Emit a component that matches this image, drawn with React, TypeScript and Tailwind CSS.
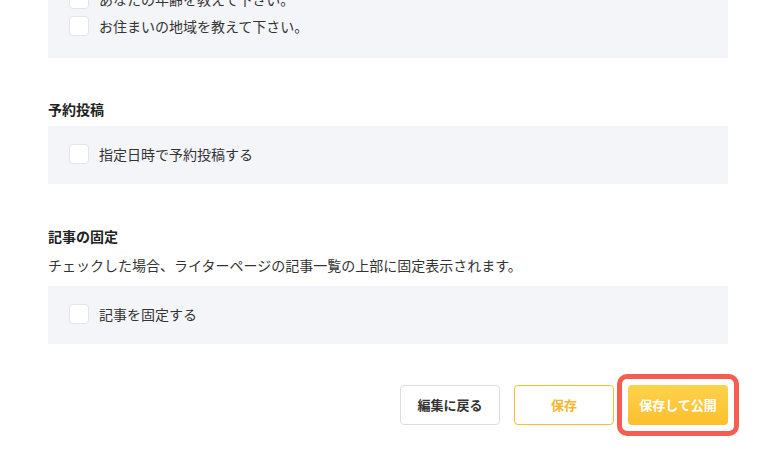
const font = { fontFamily: '"Noto Sans CJK JP", "Noto Sans", sans-serif' }

function Check({ label }: { label: string }) {
  return (
    <label className="flex items-center gap-[10px] h-5">
      <span className="w-5 h-5 rounded-[4px] bg-white border border-[#e3e4e8] shrink-0" />
      <span className="text-[14px] text-[#333]">{label}</span>
    </label>
  )
}

function Panel({ children, className = "" }: { children: React.ReactNode; className?: string }) {
  return (
    <div className={"bg-[#f4f5f9] pl-[21px] pt-[18px] flex flex-col gap-[7px] " + className}>
      {children}
    </div>
  )
}

export default function App() {
  return (
    <div className="w-[783px] h-[465px] overflow-hidden bg-white" style={font}>
      <div className="w-[680px] ml-12">
        <Panel className="-mt-[29px] pb-[22px]">
          <Check label="あなたの年齢を教えて下さい。" />
          <Check label="お住まいの地域を教えて下さい。" />
        </Panel>

        <h2 className="mt-[41px] mb-[7px] text-[14px] leading-5 font-bold text-[#222]">予約投稿</h2>
        <Panel className="pb-5">
          <Check label="指定日時で予約投稿する" />
        </Panel>

        <h2 className="mt-[42px] text-[14px] leading-5 font-bold text-[#222]">記事の固定</h2>
        <p className="mt-[9px] mb-[11px] text-[14px] leading-5 text-[#333]">
          チェックした場合、ライターページの記事一覧の上部に固定表示されます。
        </p>
        <Panel className="pb-5">
          <Check label="記事を固定する" />
        </Panel>

        <div className="mt-[41px] flex justify-end gap-[14px]">
          <button className="w-[100px] h-10 rounded-[4px] border border-[#dddddd] bg-white text-[13px] font-bold text-[#333]">
            編集に戻る
          </button>
          <button className="w-[100px] h-10 rounded-[4px] border border-[#fbbd2c] bg-white text-[13px] font-bold text-[#f7b52d]">
            保存
          </button>
          <div className="relative">
            <button className="w-[100px] h-10 rounded-[4px] bg-gradient-to-b from-[#ffd24a] to-[#fcbf2c] text-[13px] font-bold text-white">
              保存して公開
            </button>
            <div className="absolute -inset-[11px] border-[5px] border-[#f45d50] rounded-[10px] pointer-events-none" />
          </div>
        </div>
      </div>
    </div>
  )
}
